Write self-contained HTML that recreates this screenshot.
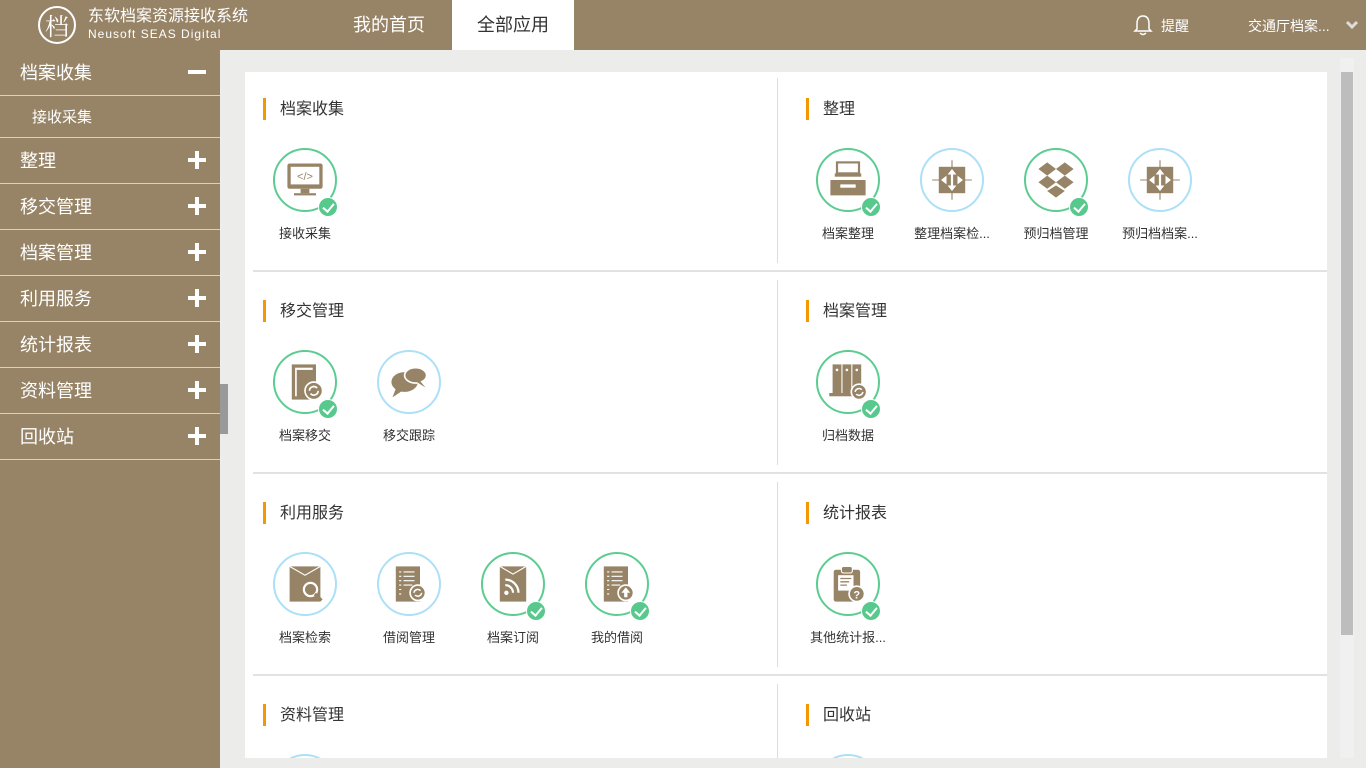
<!DOCTYPE html>
<html><head><meta charset="utf-8">
<style>
*{margin:0;padding:0;box-sizing:border-box}
html,body{overflow:hidden}
body{width:1366px;height:768px;position:relative;background:#ececea;font-family:"Liberation Sans","Noto Sans CJK SC",sans-serif}
.hdr{position:absolute;left:0;top:0;width:1366px;height:50px;background:#978467;color:#fff}
.logo{position:absolute;left:38px;top:6px;width:38px;height:38px;border:2px solid #fff;border-radius:50%;color:#fff;font-size:24px;text-align:center;line-height:33px;font-family:"Noto Serif CJK SC",serif}
.t1{position:absolute;left:88px;top:7px;font-size:16px;line-height:20px}
.t2{position:absolute;left:88px;top:26px;font-size:12px;line-height:16px;letter-spacing:1px}
.nav{position:absolute;top:0;height:50px;line-height:50px;font-size:18px;text-align:center}
.sb{position:absolute;left:0;top:50px;width:220px;height:718px;background:#978467}
.it{height:46px;border-bottom:1px solid #d9d0c0;color:#fff;font-size:18px;line-height:46px;padding-left:20px;position:relative}
.it .p{position:absolute;right:14px;top:13px;width:18px;height:18px}
.it .p:before{content:"";position:absolute;left:0;top:7px;width:18px;height:4px;background:#fff}
.it .p.pl:after{content:"";position:absolute;left:7px;top:0;width:4px;height:18px;background:#fff}
.sub{height:42px;border-bottom:1px solid #d9d0c0;color:#fff;font-size:15px;line-height:44px;padding-left:32px}
.handle{position:absolute;left:220px;top:384px;width:8px;height:50px;background:#999}
.panel{position:absolute;left:245px;top:72px;width:1082px;height:686px;background:#fff;overflow:hidden}
.hl{position:absolute;left:8px;width:1074px;height:2px;background:#e2e2e2}
.vl{position:absolute;left:532px;width:1px;background:#ddd}
.ttl{position:absolute;font-size:16px;color:#333;border-left:3px solid #f39800;padding-left:14px;height:22px;line-height:24px}
.app{position:absolute;width:104px;text-align:center}
.c{position:relative;width:64px;height:64px;margin:0 auto;border-radius:50%;border:2px solid #5ccc91}
.c.b{border-color:#ace0f7}
.c svg{position:absolute;left:8px;top:8px;width:44px;height:44px}
.ck{position:absolute;right:-3px;bottom:-7px;width:20px;height:20px;border-radius:50%;background:#58c98c;border:1px solid #fff}
.ck:after{content:"";position:absolute;left:6px;top:3px;width:5px;height:9px;border:solid #fff;border-width:0 2px 2px 0;transform:rotate(40deg)}
.lb{font-size:13px;color:#333;margin-top:11px;white-space:nowrap}
.sc{position:absolute;left:1340px;top:58px;width:14px;height:700px;background:#f0f0f0}
.th{position:absolute;left:1341px;top:72px;width:12px;height:563px;background:#bdbdbd}
</style></head><body>
<div class="hdr">
<div class="logo">档</div>
<div class="t1">东软档案资源接收系统</div>
<div class="t2">Neusoft SEAS Digital</div>
<div class="nav" style="left:328px;width:122px">我的首页</div>
<div class="nav" style="left:452px;width:122px;background:#fff;color:#333">全部应用</div>
<svg style="position:absolute;left:1133px;top:14px" width="20" height="22" viewBox="0 0 20 22"><path d="M10 2 C5 2 4 6 4 10 L4 15 L2 17 L18 17 L16 15 L16 10 C16 6 15 2 10 2 Z M7 19 Q10 22 13 19" fill="none" stroke="#fff" stroke-width="1.5"/></svg>
<div style="position:absolute;left:1161px;top:16px;font-size:14px">提醒</div>
<div style="position:absolute;left:1248px;top:16px;font-size:14px">交通厅档案...</div>
<svg style="position:absolute;left:1345px;top:20px" width="14" height="10" viewBox="0 0 14 10"><path d="M2 2 L7 7 L12 2" fill="none" stroke="#ddd" stroke-width="3"/></svg>
</div>
<div class="sb">
<div class="it">档案收集<span class="p"></span></div>
<div class="sub">接收采集</div>
<div class="it">整理<span class="p pl"></span></div>
<div class="it">移交管理<span class="p pl"></span></div>
<div class="it">档案管理<span class="p pl"></span></div>
<div class="it">利用服务<span class="p pl"></span></div>
<div class="it">统计报表<span class="p pl"></span></div>
<div class="it">资料管理<span class="p pl"></span></div>
<div class="it">回收站<span class="p pl"></span></div>
</div>
<div class="handle"></div>
<div class="sc"></div><div class="th"></div>
<div class="panel">
<div class="vl" style="top:6px;height:185px"></div>
<div class="vl" style="top:208px;height:185px"></div>
<div class="vl" style="top:410px;height:185px"></div>
<div class="vl" style="top:612px;height:80px"></div>
<div class="hl" style="top:198px"></div>
<div class="hl" style="top:400px"></div>
<div class="hl" style="top:602px"></div>

<div class="ttl" style="left:18px;top:26px">档案收集</div>
<div class="ttl" style="left:561px;top:26px">整理</div>
<div class="ttl" style="left:18px;top:228px">移交管理</div>
<div class="ttl" style="left:561px;top:228px">档案管理</div>
<div class="ttl" style="left:18px;top:430px">利用服务</div>
<div class="ttl" style="left:561px;top:430px">统计报表</div>
<div class="ttl" style="left:18px;top:632px">资料管理</div>
<div class="ttl" style="left:561px;top:632px">回收站</div>

<div class="app" style="left:8px;top:76px"><div class="c"><svg viewBox="0 0 40 40"><rect x="4" y="5" width="32" height="23" rx="2" fill="#978467"/><rect x="7" y="8" width="26" height="16" fill="#fff"/><text x="20" y="20" font-size="10" text-anchor="middle" fill="#978467" font-family="Liberation Sans">&lt;/&gt;</text><rect x="16" y="28" width="8" height="4" fill="#978467"/><rect x="10" y="32" width="20" height="2" fill="#978467"/></svg><span class="ck"></span></div><div class="lb">接收采集</div></div>

<div class="app" style="left:551px;top:76px"><div class="c"><svg viewBox="0 0 40 40"><rect x="10" y="4" width="20" height="10" fill="none" stroke="#978467" stroke-width="2"/><rect x="8" y="14" width="24" height="3" fill="#978467"/><path d="M4 20 L36 20 L36 34 L4 34 Z" fill="#978467"/><rect x="13" y="24" width="14" height="3" fill="#fff"/></svg><span class="ck"></span></div><div class="lb">档案整理</div></div>
<div class="app" style="left:655px;top:76px"><div class="c b"><svg viewBox="0 0 40 40"><rect x="8" y="8" width="24" height="24" fill="#978467"/><path d="M20 2V38M2 20H38" stroke="#978467" stroke-width="1"/><path d="M20 10 L16 15 H24Z M20 30 L16 25 H24Z M10 20 L15 16 V24Z M30 20 L25 16 V24Z" fill="#fff"/><rect x="19" y="14" width="2" height="12" fill="#fff"/></svg></div><div class="lb">整理档案检...</div></div>
<div class="app" style="left:759px;top:76px"><div class="c"><svg viewBox="0 0 40 40"><path d="M12 4L20 10 12 16 4 10Z M28 4L36 10 28 16 20 10Z M12 16L20 22 12 28 4 22Z M28 16L36 22 28 28 20 22Z M12 30L20 36 28 30 20 25Z" fill="#978467"/></svg><span class="ck"></span></div><div class="lb">预归档管理</div></div>
<div class="app" style="left:863px;top:76px"><div class="c b"><svg viewBox="0 0 40 40"><rect x="8" y="8" width="24" height="24" fill="#978467"/><path d="M20 2V38M2 20H38" stroke="#978467" stroke-width="1"/><path d="M20 10 L16 15 H24Z M20 30 L16 25 H24Z M10 20 L15 16 V24Z M30 20 L25 16 V24Z" fill="#fff"/><rect x="19" y="14" width="2" height="12" fill="#fff"/></svg></div><div class="lb">预归档档案...</div></div>

<div class="app" style="left:8px;top:278px"><div class="c"><svg viewBox="0 0 40 40"><rect x="8" y="4" width="22" height="32" fill="#978467"/><rect x="11" y="7" width="16" height="2" fill="#fff"/><rect x="11" y="9" width="1.5" height="24" fill="#fff"/><circle cx="28" cy="28" r="8" fill="#978467" stroke="#fff" stroke-width="1.5"/><path d="M24 28a4 4 0 0 1 7-2.5M32 28a4 4 0 0 1-7 2.5" stroke="#fff" stroke-width="1.5" fill="none"/></svg><span class="ck"></span></div><div class="lb">档案移交</div></div>
<div class="app" style="left:112px;top:278px"><div class="c b"><svg viewBox="0 0 40 40"><ellipse cx="16" cy="20" rx="12" ry="9" fill="#978467"/><path d="M8 26L5 34 14 28Z" fill="#978467"/><ellipse cx="26" cy="14" rx="10" ry="7" fill="#978467" stroke="#fff" stroke-width="1.5"/><path d="M30 19L35 25 27 20Z" fill="#978467"/></svg></div><div class="lb">移交跟踪</div></div>
<div class="app" style="left:551px;top:278px"><div class="c"><svg viewBox="0 0 40 40"><rect x="6" y="4" width="8" height="26" fill="#978467"/><rect x="15" y="4" width="8" height="26" fill="#978467"/><rect x="24" y="4" width="8" height="20" fill="#978467"/><circle cx="10" cy="9" r="1.2" fill="#fff"/><circle cx="19" cy="9" r="1.2" fill="#fff"/><circle cx="28" cy="9" r="1.2" fill="#fff"/><rect x="3" y="30" width="24" height="3" fill="#978467"/><circle cx="30" cy="29" r="7" fill="#978467" stroke="#fff" stroke-width="1.5"/><path d="M26.5 29a3.5 3.5 0 0 1 6-2M33.5 29a3.5 3.5 0 0 1-6 2" stroke="#fff" stroke-width="1.4" fill="none"/></svg><span class="ck"></span></div><div class="lb">归档数据</div></div>

<div class="app" style="left:8px;top:480px"><div class="c b"><svg viewBox="0 0 40 40"><rect x="6" y="4" width="28" height="32" fill="#978467"/><path d="M6 4L20 12 34 4" stroke="#fff" stroke-width="1" fill="none"/><circle cx="25" cy="25" r="6" fill="#978467" stroke="#fff" stroke-width="2"/><path d="M29 29L35 35" stroke="#978467" stroke-width="3"/></svg></div><div class="lb">档案检索</div></div>
<div class="app" style="left:112px;top:480px"><div class="c b"><svg viewBox="0 0 40 40"><rect x="8" y="4" width="22" height="32" fill="#978467"/><path d="M11 9h2M15 9h10M11 13h2M15 13h10M11 17h2M15 17h10M11 21h2M15 21h8M11 25h2M11 29h2" stroke="#fff" stroke-width="1"/><circle cx="28" cy="28" r="7" fill="#978467" stroke="#fff" stroke-width="1.5"/><path d="M24.5 28a3.5 3.5 0 0 1 6-2M31.5 28a3.5 3.5 0 0 1-6 2" stroke="#fff" stroke-width="1.4" fill="none"/></svg></div><div class="lb">借阅管理</div></div>
<div class="app" style="left:216px;top:480px"><div class="c"><svg viewBox="0 0 40 40"><rect x="8" y="4" width="24" height="32" fill="#978467"/><path d="M8 4L20 11 32 4" stroke="#fff" stroke-width="1" fill="none"/><circle cx="14" cy="28" r="2" fill="#fff"/><path d="M13 21a7 7 0 0 1 7 7M13 16a12 12 0 0 1 12 12" stroke="#fff" stroke-width="2" fill="none"/></svg><span class="ck"></span></div><div class="lb">档案订阅</div></div>
<div class="app" style="left:320px;top:480px"><div class="c"><svg viewBox="0 0 40 40"><rect x="8" y="4" width="22" height="32" fill="#978467"/><path d="M11 9h2M15 9h10M11 13h2M15 13h10M11 17h2M15 17h10M11 21h2M15 21h8M11 25h2M11 29h2" stroke="#fff" stroke-width="1"/><circle cx="28" cy="28" r="7" fill="#978467" stroke="#fff" stroke-width="1.5"/><path d="M28 23L24 28H26.5V32H29.5V28H32Z" fill="#fff"/></svg><span class="ck"></span></div><div class="lb">我的借阅</div></div>
<div class="app" style="left:551px;top:480px"><div class="c"><svg viewBox="0 0 40 40"><rect x="7" y="7" width="24" height="29" rx="2" fill="#978467"/><rect x="14" y="4" width="10" height="6" rx="2" fill="#978467" stroke="#fff" stroke-width="1"/><rect x="11" y="12" width="14" height="14" fill="#fff"/><path d="M13 15h10M13 18h8M13 21h6" stroke="#978467" stroke-width="1.2"/><circle cx="28" cy="29" r="7" fill="#978467" stroke="#fff" stroke-width="1.5"/><text x="28" y="33" font-size="10" font-weight="bold" text-anchor="middle" fill="#fff" font-family="Liberation Sans">?</text></svg><span class="ck"></span></div><div class="lb">其他统计报...</div></div>

<div class="app" style="left:8px;top:682px"><div class="c b"></div></div>
<div class="app" style="left:551px;top:682px"><div class="c b"></div></div>
</div>
</body></html>
